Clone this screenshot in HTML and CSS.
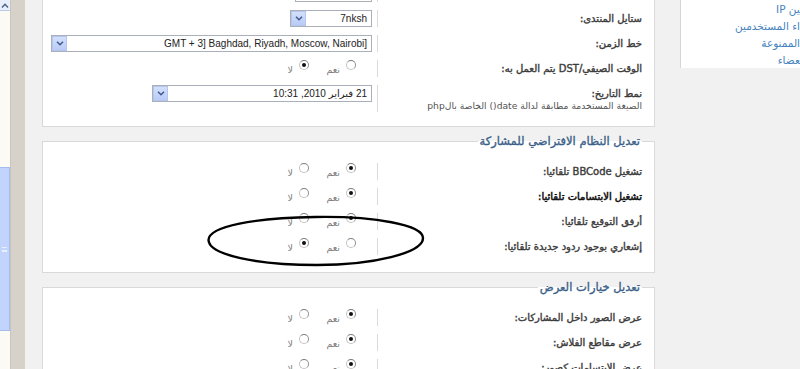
FILE: index.html
```html
<!DOCTYPE html>
<html lang="ar">
<head>
<meta charset="utf-8">
<title>الملف الشخصي - التفضيلات</title>
<link rel="stylesheet" href="styles.css">
</head>
<body>
<div class="screen">
  <div class="scrollbar">
    <div class="sb-arrow"><svg width="8" height="5" viewBox="0 0 8 5"><path d="M1 4.5 L4 1.3 L7 4.5" fill="none" stroke="#4d6185" stroke-width="1.4"/></svg></div>
    <div class="sb-thumb"><span class="grip"></span></div>
  </div>
  <div class="gutter"></div>
  <div class="workspace">
    <main class="content" dir="rtl">
      <section class="panel panel-first">
        <div class="row"><div class="label"></div><div class="field"><span class="textbox"></span></div></div>
        <div class="row"><div class="label">ستايل المنتدى:</div><div class="field">
          <div class="select w-style"><span class="select-value">7nksh</span><span class="select-btn"><svg width="8" height="5" viewBox="0 0 8 5"><path d="M1 0.8 L4 3.8 L7 0.8" fill="none" stroke="#3f5a8c" stroke-width="1.5"/></svg></span></div>
        </div></div>
        <div class="row"><div class="label">خط الزمن:</div><div class="field">
          <div class="select w-tz"><span class="select-value ltr-value" dir="ltr">GMT + 3] Baghdad, Riyadh, Moscow, Nairobi]</span><span class="select-btn"><svg width="8" height="5" viewBox="0 0 8 5"><path d="M1 0.8 L4 3.8 L7 0.8" fill="none" stroke="#3f5a8c" stroke-width="1.5"/></svg></span></div>
        </div></div>
        <div class="row"><div class="label">الوقت الصيفي/DST يتم العمل به:</div><div class="field">
          <div class="radios"><span class="opt"><span class="radio"></span><span class="opt-text">نعم</span></span><span class="opt"><span class="radio checked"></span><span class="opt-text">لا</span></span></div>
        </div></div>
        <div class="row row-top"><div class="label label-stack"><span>نمط التاريخ:</span><span class="desc">الصيغة المستخدمة مطابقة لدالة date() الخاصة بالphp</span></div><div class="field">
          <div class="select w-date"><span class="select-value">21 فبراير 2010, 10:31</span><span class="select-btn"><svg width="8" height="5" viewBox="0 0 8 5"><path d="M1 0.8 L4 3.8 L7 0.8" fill="none" stroke="#3f5a8c" stroke-width="1.5"/></svg></span></div>
        </div></div>
      </section>

      <fieldset class="panel">
        <legend>تعديل النظام الافتراضي للمشاركة</legend>
        <div class="row"><div class="label">تشغيل BBCode تلقائيا:</div><div class="field">
          <div class="radios"><span class="opt"><span class="radio checked"></span><span class="opt-text">نعم</span></span><span class="opt"><span class="radio"></span><span class="opt-text">لا</span></span></div>
        </div></div>
        <div class="row"><div class="label label-dark">تشغيل الابتسامات تلقائيا:</div><div class="field">
          <div class="radios"><span class="opt"><span class="radio checked"></span><span class="opt-text">نعم</span></span><span class="opt"><span class="radio"></span><span class="opt-text">لا</span></span></div>
        </div></div>
        <div class="row"><div class="label">أرفق التوقيع تلقائيا:</div><div class="field">
          <div class="radios"><span class="opt"><span class="radio checked"></span><span class="opt-text">نعم</span></span><span class="opt"><span class="radio"></span><span class="opt-text">لا</span></span></div>
        </div></div>
        <div class="row"><div class="label">إشعاري بوجود ردود جديدة تلقائيا:</div><div class="field">
          <div class="radios"><span class="opt"><span class="radio"></span><span class="opt-text">نعم</span></span><span class="opt"><span class="radio checked"></span><span class="opt-text">لا</span></span></div>
        </div></div>
      </fieldset>

      <fieldset class="panel">
        <legend>تعديل خيارات العرض</legend>
        <div class="row"><div class="label">عرض الصور داخل المشاركات:</div><div class="field">
          <div class="radios"><span class="opt"><span class="radio checked"></span><span class="opt-text">نعم</span></span><span class="opt"><span class="radio"></span><span class="opt-text">لا</span></span></div>
        </div></div>
        <div class="row"><div class="label">عرض مقاطع الفلاش:</div><div class="field">
          <div class="radios"><span class="opt"><span class="radio checked"></span><span class="opt-text">نعم</span></span><span class="opt"><span class="radio"></span><span class="opt-text">لا</span></span></div>
        </div></div>
        <div class="row"><div class="label">عرض الابتسامات كصور:</div><div class="field">
          <div class="radios"><span class="opt"><span class="radio checked"></span><span class="opt-text">نعم</span></span><span class="opt"><span class="radio"></span><span class="opt-text">لا</span></span></div>
        </div></div>
      </fieldset>
    </main>
    <aside class="sidebar" dir="rtl">
      <ul class="side-links">
        <li>&#x200D;ين IP</li>
        <li>اء المستخدمين</li>
        <li>الممنوعة</li>
        <li>&#x200D;عضاء</li>
      </ul>
    </aside>
  </div>
  <svg class="annotation" width="226" height="58" viewBox="0 0 226 58"><path d="M110 4 C170 3 218 12 218 25 C218 40 168 52 112 52 C52 52 4 42 3.5 27 C4 13 50 5 110 4 Z" fill="none" stroke="#000" stroke-width="2.4"/></svg>
</div>
</body>
</html>
```

FILE: styles.css
```css
* { box-sizing: border-box; }
html, body { margin: 0; height: 100%; }
body {
  background: #f1f1f1;
  font-family: "DejaVu Sans", "Noto Sans", sans-serif;
  overflow: hidden;
}
.screen {
  display: flex;
  height: 369px;
  overflow: hidden;
  position: relative;
}

/* scrollbar strip */
.scrollbar {
  width: 11px;
  flex: none;
  background: #fbfaf5;
  border-right: 1px solid #c9c5bd;
  display: flex;
  flex-direction: column;
}
.sb-arrow {
  height: 11px;
  display: flex;
  align-items: center;
  justify-content: center;
  background: #e6edfb;
  border-bottom: 1px solid #bccbec;
}
.sb-thumb {
  margin-top: 156px;
  height: 164px;
  background: #c3d4fc;
  border: 1px solid #a6bcef;
  border-left: none;
  display: flex;
  align-items: center;
  justify-content: center;
}
.grip {
  width: 5px;
  height: 5px;
  border-top: 1px solid #e8efff;
  border-bottom: 1px solid #e8efff;
  box-shadow: inset 0 -2px 0 -1px #e8efff;
}
.gutter {
  width: 14px;
  flex: none;
  background: #d6d2ca;
}
.workspace {
  flex: 1;
  min-width: 0;
  display: flex;
  padding-left: 17px;
}
.content {
  width: 613px;
  flex: none;
  margin-top: -30px;
}

/* panels */
.panel {
  background: #fff;
  border: 1px solid #d9d9d9;
}
.panel-first {
  padding: 10px 12px 10px 0;
}
fieldset.panel {
  margin: 7px 0 0;
  padding: 11px 12px 13px 0;
  min-width: 0;
}
legend {
  padding: 0 2px;
  font-size: 11.5px;
  line-height: 14px;
  font-weight: normal;
  -webkit-text-stroke: 0.35px #3b5f88;
  color: #3b5f88;
}

.row {
  display: flex;
  align-items: center;
  padding: 4px 0;
}
.row-top { align-items: flex-start; }
.label {
  width: 265px;
  flex: none;
  min-height: 17px;
  border-left: 1px solid #dadada;
  display: flex;
  align-items: center;
  font-size: 10px;
  line-height: 13px;
  color: #3c3c3c;
  -webkit-text-stroke: 0.4px #3c3c3c;
}
.label-dark { color: #111; -webkit-text-stroke: 0.5px #111; }
.label-stack {
  flex-direction: column;
  align-items: flex-start;
  padding-top: 3px;
  line-height: 12px;
}
.desc {
  color: #555;
  font-size: 9.2px;
  -webkit-text-stroke: 0;
}
.field {
  flex: 1;
  display: flex;
  align-items: center;
  padding-right: 5px;
}

/* inputs */
.textbox {
  width: 77px;
  height: 17px;
  border: 1px solid #a9b0ba;
  background: #fff;
}
.select {
  height: 17px;
  border: 1px solid #a9b0ba;
  background: #fff;
  display: flex;
  align-items: center;
  font-family: "Liberation Sans", "DejaVu Sans", sans-serif;
  font-size: 10px;
  color: #222;
}
.select-value {
  flex: 1;
  padding: 0 4px;
  white-space: nowrap;
  overflow: hidden;
}
.ltr-value { text-align: right; }
.select-btn {
  width: 15px;
  height: 15px;
  flex: none;
  background: linear-gradient(#d3e0fd, #b9cbf6);
  border: 1px solid #b4c6ef;
  display: flex;
  align-items: center;
  justify-content: center;
}
.w-style { width: 82px; }
.w-tz { width: 321px; }
.w-date { width: 220px; }

/* radios */
.radios {
  display: flex;
  padding-right: 16px;
}
.opt {
  display: flex;
  align-items: flex-start;
  gap: 6px;
}
.opt:first-child { width: 47px; }
.radio {
  width: 10px;
  height: 10px;
  border-radius: 50%;
  border: 1px solid #c4c4c4;
  border-top-color: #7d7d7d;
  border-right-color: #8f8f8f;
  background: #fff;
  display: flex;
  align-items: center;
  justify-content: center;
  margin-top: -2px;
}
.radio.checked::after {
  content: "";
  width: 4px;
  height: 4px;
  border-radius: 50%;
  background: #111;
}
.opt-text {
  font-size: 9.5px;
  line-height: 12px;
  color: #808080;
  padding-top: 2px;
}

/* sidebar */
.sidebar {
  margin-left: 25px;
  flex: 1;
  height: 68px;
  background: #fff;
  border-left: 1px solid #d6d6d6;
  overflow: hidden;
}
.side-links {
  list-style: none;
  margin: 0;
  padding: 1px 0 0;
  text-align: right;
  font-size: 10.5px;
  line-height: 17px;
  color: #4683bf;
}

/* hand-drawn annotation ellipse */
.annotation {
  position: absolute;
  left: 205px;
  top: 213px;
}
```
